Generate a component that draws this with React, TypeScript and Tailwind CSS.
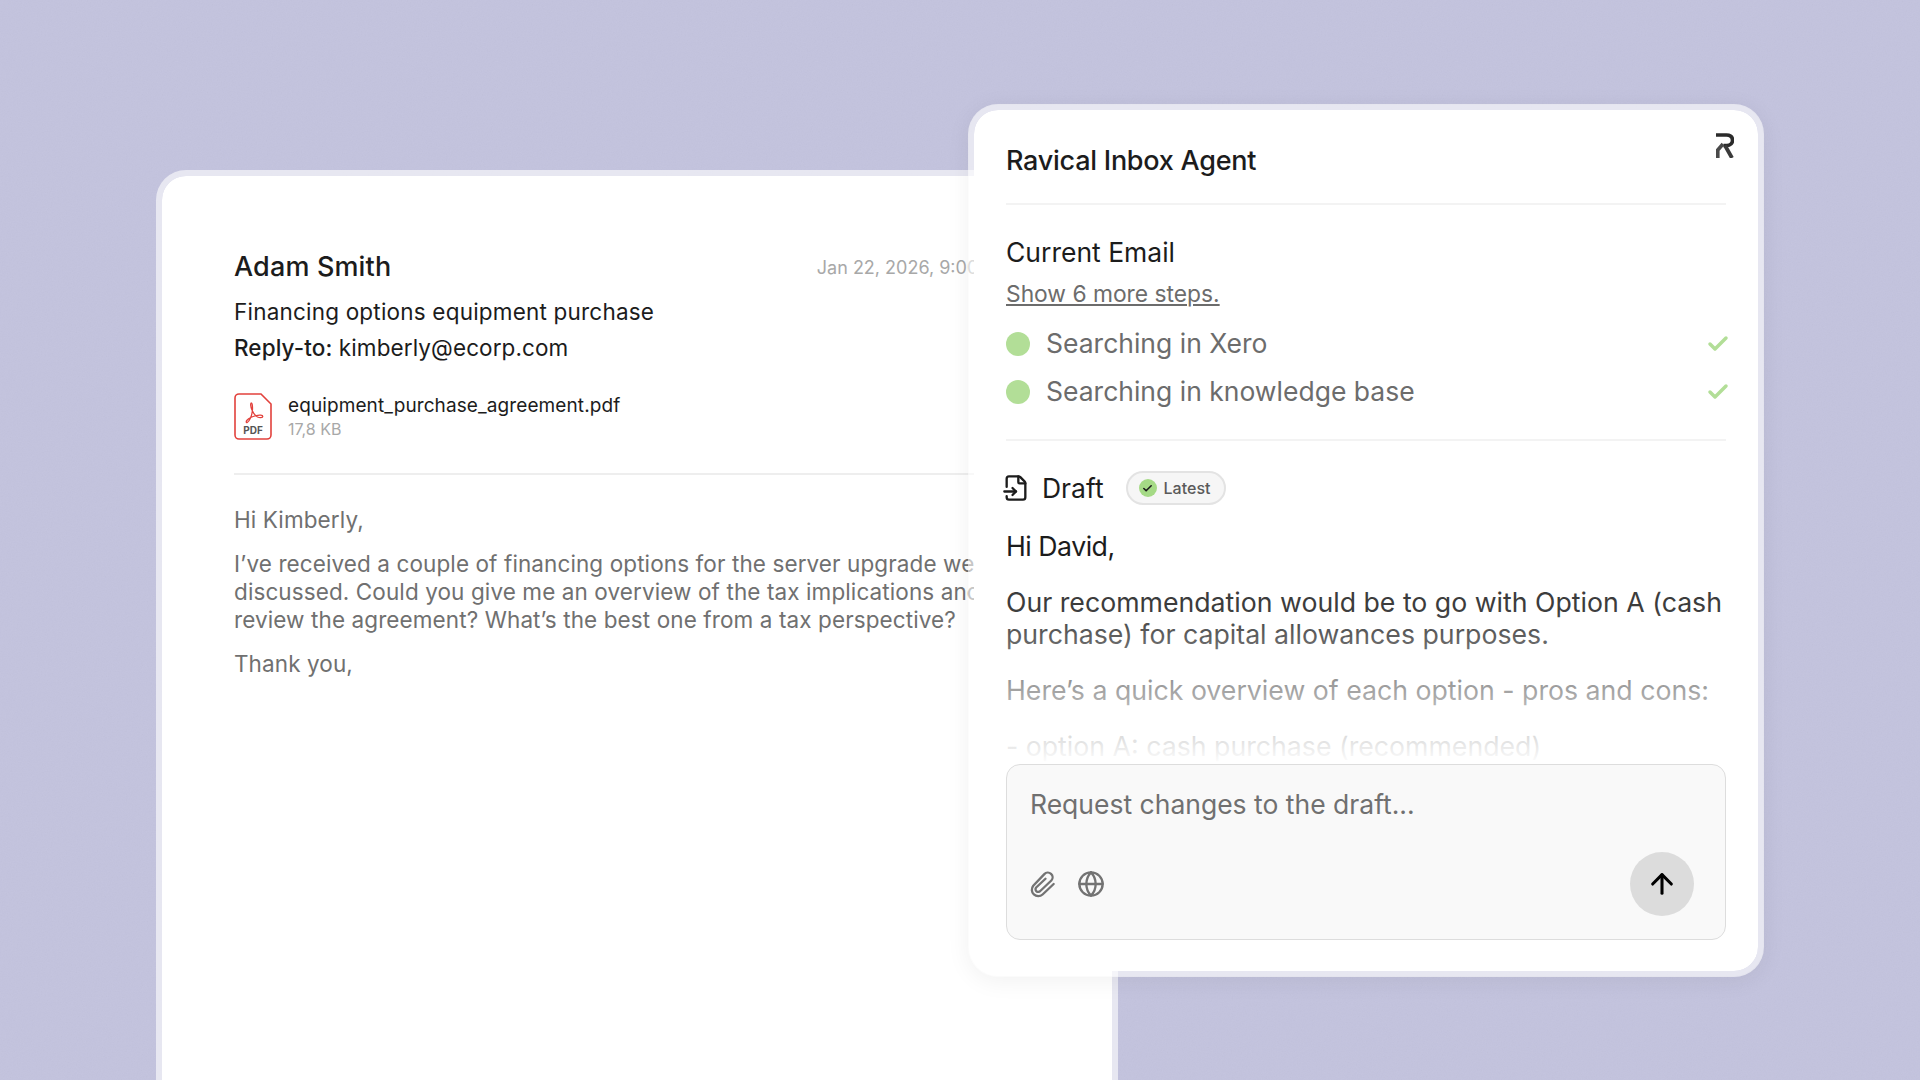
import { ArrowUp, Check, FileInput, Globe } from "lucide-react";

const font = "font-['Inter','Liberation_Sans',sans-serif]";

function PdfIcon() {
  return (
    <svg width="38" height="47" viewBox="0 0 38 47" fill="none" className="shrink-0">
      <path d="M5 1h22l10 10v31a4 4 0 0 1-4 4H5a4 4 0 0 1-4-4V5a4 4 0 0 1 4-4Z" stroke="#e2413c" strokeWidth="1.6" fill="#fff" />
      <path
        d="M17.500 10c-1.300 0-1 3.500.5 7 1.500 3.600 3.500 6 5.500 7 2 .9 5.300 1 5.300-.5s-3.600-1.600-6.500-.9c-3 .7-7.300 2.500-9.300 4.700-1.300 1.500-.8 2.700.3 2.200 2-1 4.500-6.500 5-11 .4-3.500.2-8.500-1-8.500Z"
        stroke="#e2413c"
        strokeWidth="1.300"
      />
      <text x="19" y="41" textAnchor="middle" fontSize="10" fontWeight="700" fill="#555" fontFamily="Inter, sans-serif">
        PDF
      </text>
    </svg>
  );
}

function RavicalLogo() {
  return (
    <svg width="18" height="25" viewBox="0 0 18 25" fill="none">
      <path d="M0 2h10.500c4 0 6 2.200 6 5.300 0 3-2.200 5.200-5.700 5.200H7.500" stroke="#2b2b2b" strokeWidth="3.600" />
      <path d="M9 12.500 16 25" stroke="#3a3a3a" strokeWidth="3.800" />
      <path d="M7 11 1.800 17v8" stroke="#4a4a4a" strokeWidth="3.600" />
    </svg>
  );
}

function ClipIcon() {
  return (
    <svg width="28" height="28" viewBox="0 0 24 24" fill="none" stroke="currentColor" strokeWidth="2" strokeLinecap="round" strokeLinejoin="round">
      <path d="M22 12 12.500 21a5.500 5.500 0 0 1-8-7.500L14 3.500a4 4 0 0 1 6 5.500L10.500 18a2.300 2.300 0 0 1-3.500-3L15 7.500" />
    </svg>
  );
}

function Step({ label }: { label: string }) {
  return (
    <div className="flex h-[48px] items-center">
      <span className="size-6 shrink-0 rounded-full bg-[#b2de97]" />
      <span className="ml-[16px] flex-1 text-[26.500px] text-[#6c6c6c]">{label}</span>
      <Check size={24} strokeWidth={3.500} className="-mr-[4px] text-[#b2de97]" />
    </div>
  );
}

function EmailCard() {
  return (
    <div className="h-[950px] w-[962px] rounded-[30px] border-[6px] border-white/60 bg-white bg-clip-padding px-[72px] pt-[75px]">
      <div className="flex items-center justify-between">
        <h2 className="text-[27px] leading-[32px] font-medium tracking-[0.15px] text-[#1c1c1c]">Adam Smith</h2>
        <span className="mr-[28px] text-[18px] whitespace-nowrap text-[#a8a8a8]">Jan 22, 2026, 9:00 AM</span>
      </div>
      <p className="mt-[13px] text-[22.500px] leading-[32px] tracking-[0.2px] text-[#1c1c1c]">Financing options equipment purchase</p>
      <p className="mt-[4px] text-[22.500px] leading-[32px] tracking-[0.1px] text-[#1c1c1c]">
        <span className="font-medium">Reply-to:</span> kimberly@ecorp.com
      </p>
      <div className="mt-[29px] flex items-center gap-[16px]">
        <PdfIcon />
        <div>
          <p className="text-[19px] leading-[24px] tracking-[0.1px] text-[#1c1c1c]">equipment_purchase_agreement.pdf</p>
          <p className="text-[16px] leading-[22px] text-[#a8a8a8]">17,8 KB</p>
        </div>
      </div>
      <div className="mt-[33px] h-[2px] bg-[#eeeeee]" />
      <div className="mt-[31px] text-[22.500px] leading-[28px] tracking-[0.1px] whitespace-nowrap text-[#707070]">
        <p>Hi Kimberly,</p>
        <p className="mt-[16px]">
          I’ve received a couple of financing options for the server upgrade we
          <br />
          discussed. Could you give me an overview of the tax implications and
          <br />
          review the agreement? What’s the best one from a tax perspective?
        </p>
        <p className="mt-[16px]">Thank you,</p>
      </div>
    </div>
  );
}

function AgentCard() {
  return (
    <div className="absolute top-[104px] left-[968px] h-[873px] w-[796px] rounded-[30px] border-[6px] border-white/60 bg-white bg-clip-padding px-[32px] shadow-[0_4px_24px_rgba(0,0,0,0.06)]">
      <div className="absolute top-[23px] right-[24px]">
        <RavicalLogo />
      </div>
      <div className="flex h-[95px] items-end border-b-2 border-[#f3f3f3] pb-[25px]">
        <h1 className="text-[27px] leading-[34px] font-medium tracking-[-0.25px] text-[#1c1c1c]">Ravical Inbox Agent</h1>
      </div>
      <h3 className="mt-[30px] text-[26.500px] leading-[34px] text-[#1c1c1c]">Current Email</h3>
      <a className="mt-[11px] block text-[22.800px] leading-[28px] text-[#6c6c6c] underline">Show 6 more steps.</a>
      <div className="mt-[12px] border-b-2 border-[#f3f3f3] pb-[23px]">
        <Step label="Searching in Xero" />
        <Step label="Searching in knowledge base" />
      </div>
      <div className="mt-[30px] flex items-center">
        <FileInput size={28} strokeWidth={2} className="-ml-[4px] text-[#1c1c1c]" />
        <span className="ml-[12px] text-[26.500px] leading-[34px] text-[#1c1c1c]">Draft</span>
        <span className="ml-[22px] flex h-[34px] items-center gap-[7px] rounded-full border-2 border-[#e3e3e3] bg-[#f6f6f6] pr-[14px] pl-[11px] text-[16px] font-medium text-[#5a5a5a]">
          <span className="grid size-[18px] place-items-center rounded-full bg-[#a5da86]">
            <Check size={11} strokeWidth={3.500} className="text-[#1c1c1c]" />
          </span>
          Latest
        </span>
      </div>
      <div className="relative mt-[25px] h-[234px] overflow-hidden text-[26.700px] leading-[32px] whitespace-nowrap text-[#3c3c3c]">
        <p className="tracking-[-0.5px] text-[#1c1c1c]">Hi David,</p>
        <p className="mt-[24px]">
          Our recommendation would be to go with Option A (cash
          <br />
          purchase) for capital allowances purposes.
        </p>
        <p className="mt-[24px]">Here’s a quick overview of each option - pros and cons:</p>
        <p className="mt-[24px]">- option A: cash purchase (recommended)</p>
        <div className="absolute inset-x-0 top-[78px] h-[156px] bg-gradient-to-b from-white/0 to-white" />
      </div>
      <div className="relative h-[176px] rounded-[14px] border border-[#dddddd] bg-[#f9f9f9] px-[23px] pt-[22px]">
        <p className="text-[26.500px] leading-[34px] text-[#707070]">Request changes to the draft...</p>
        <div className="mt-[31px] flex items-center justify-between">
          <div className="-ml-[2px] flex items-center gap-[21px] text-[#737373]">
            <ClipIcon />
            <Globe size={28} strokeWidth={2} />
          </div>
          <button className="mr-[8px] grid size-[64px] place-items-center rounded-full bg-[#dcdcdc]">
            <ArrowUp size={32} strokeWidth={2.300} className="text-black" />
          </button>
        </div>
      </div>
    </div>
  );
}

export default function App() {
  return (
    <div className={`relative h-[1080px] w-[1920px] overflow-hidden bg-[#c3c3de] pt-[170px] pl-[156px] ${font}`}>
      <svg className="absolute inset-0 size-full opacity-[0.06]">
        <filter id="grain">
          <feTurbulence type="fractalNoise" baseFrequency="0.8" numOctaves="3" />
          <feColorMatrix type="saturate" values="0" />
        </filter>
        <rect width="100%" height="100%" filter="url(#grain)" />
      </svg>
      <div className="relative">
        <EmailCard />
      </div>
      <AgentCard />
    </div>
  );
}
